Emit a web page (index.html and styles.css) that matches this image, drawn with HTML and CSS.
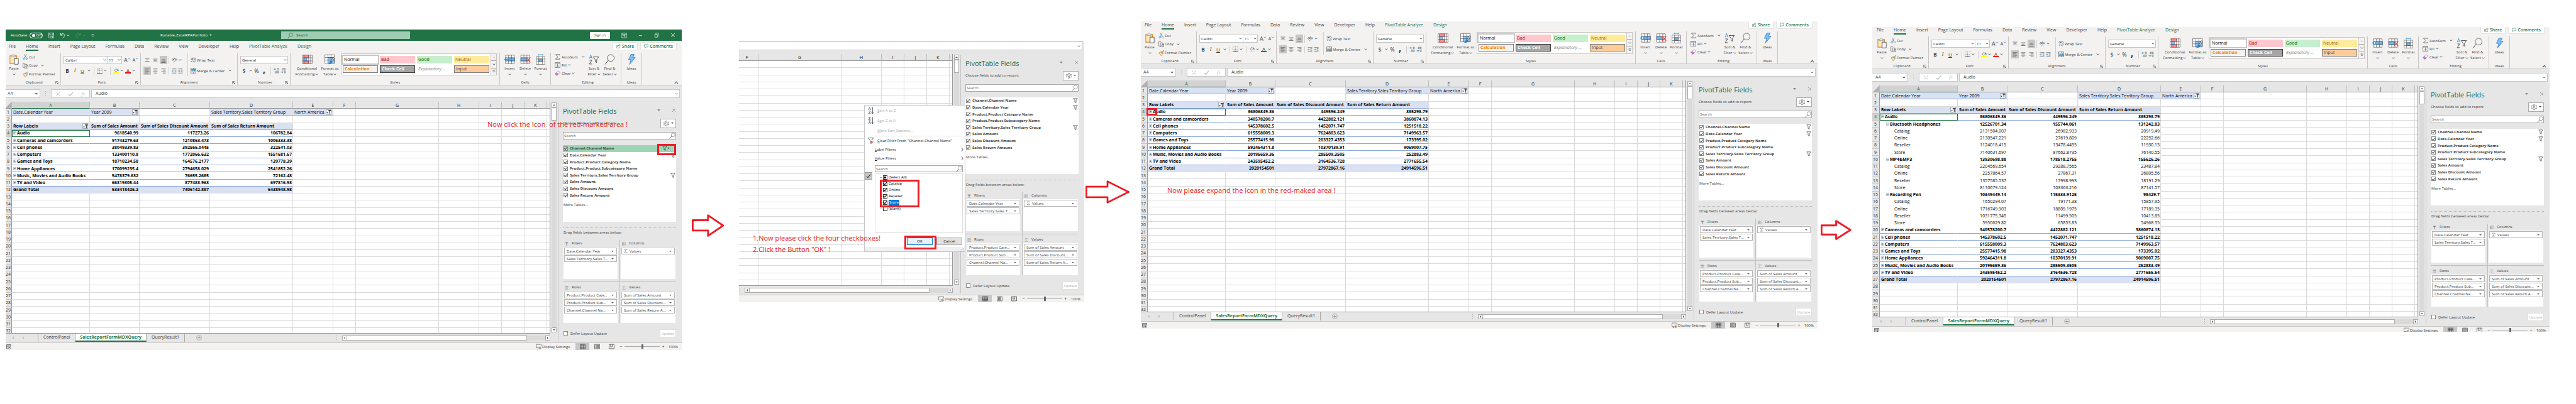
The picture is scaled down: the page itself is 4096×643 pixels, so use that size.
FILE: index.html
```html
<!DOCTYPE html>
<html lang="en">
<head>
<meta charset="utf-8">
<title>PivotTable filter walkthrough</title>
<link rel="stylesheet" href="styles.css">
<script src="app.js" defer></script>
</head>
<body>

<svg class="sprite" aria-hidden="true">
  <symbol id="chev" viewBox="0 0 8 8"><path d="M1.5 2.5 4 5l2.500-2.500" stroke-width="1.500"/></symbol>
  <symbol id="chev-up" viewBox="0 0 8 8"><path d="M1 6l3-3.500L7 6" stroke-width="1.200"/></symbol>
  <symbol id="chev-right" viewBox="0 0 8 16"><path d="M1.500 2l5 6-5 6" stroke-width="1.500"/></symbol>
  <symbol id="tri" viewBox="0 0 8 8"><path d="M0 2h8L4 6z" fill="currentColor" stroke="none"/></symbol>
  <symbol id="tri-up" viewBox="0 0 8 8"><path d="M0 6h8L4 2z" fill="currentColor" stroke="none"/></symbol>
  <symbol id="tri-left" viewBox="0 0 8 8"><path d="M6 0v8L2 4z" fill="currentColor" stroke="none"/></symbol>
  <symbol id="tri-right" viewBox="0 0 8 8"><path d="M2 0v8l4-4z" fill="currentColor" stroke="none"/></symbol>
  <symbol id="save" viewBox="0 0 16 16"><path d="M.7.7h14.600v14.600H3L.7 13zM3.500.7v6h9v-6M5 15.300v-5h6.500v5" stroke-width="1.300"/></symbol>
  <symbol id="undo" viewBox="0 0 16 16"><path d="M2 1v6h6M2 7c3-6 12-5 12 1 0 3-3 4-6 7" stroke-width="1.600"/></symbol>
  <symbol id="redo" viewBox="0 0 16 16"><path d="M14 1v6H8M14 7C11 1 2 2 2 8c0 3 3 4 6 7" stroke-width="1.600"/></symbol>
  <symbol id="customize" viewBox="0 0 8 8"><path d="M1 1.500h6M1.500 4 4 6.500 6.500 4" stroke-width="1.200"/></symbol>
  <symbol id="search" viewBox="0 0 16 16"><circle cx="10" cy="6" r="4.800"/><path d="M6.700 9.500 1 15.500" stroke-width="1.300"/></symbol>
  <symbol id="ribbon-opts" viewBox="0 0 16 16"><path d="M1.500 1.500h13v13h-13zM1.500 4.500h13M8 13V7M5.500 9 8 6.700 10.500 9" stroke-width="1.200"/></symbol>
  <symbol id="restore" viewBox="0 0 16 16"><path d="M2.500 5h8v9.500h-8zM5.500 5V1.500h8V11h-3" stroke-width="1.300"/></symbol>
  <symbol id="cross" viewBox="0 0 16 16"><path d="M2.500 2.500l11 11M13.500 2.500l-11 11" stroke-width="1.700"/></symbol>
  <symbol id="tick" viewBox="0 0 16 16"><path d="M2 9l4 4.500L14 3" stroke-width="2.200"/></symbol>
  <symbol id="share" viewBox="0 0 16 16"><path d="M6 5H1.500v9.500h11V10M4.500 11c1-4 3-5.500 6-5.500V8.500L15 4.500 10.500 1v2.500C7 3.500 5 6 4.500 11z" stroke-width="1.200"/></symbol>
  <symbol id="comment" viewBox="0 0 16 16"><path d="M1.500 2h13v9H7l-3.500 3.500V11h-2z" stroke-width="1.300"/></symbol>

  <symbol id="paste" viewBox="0 0 28 32"><path d="M5 5H1.500v23.500H14V13h7.500V5H18" fill="#fbe7bd" stroke="#e08a1e" stroke-width="2"/><path d="M5 8V4.500h3.500C9 .5 14 .5 14.500 4.500H18V8z" fill="#f3f2f1" stroke="#777" stroke-width="1.300"/><path d="M14.500 13.500h12v17h-12z" fill="#fff" stroke-width="1.500"/></symbol>
  <symbol id="cut" viewBox="0 0 16 16"><path d="M4.500 0l5.500 11M11 0 5.500 11" stroke="#555"/><circle cx="4" cy="13" r="2.200" stroke="#2a8dd4" stroke-width="1.400"/><circle cx="11.500" cy="13" r="2.200" stroke="#2a8dd4" stroke-width="1.400"/></symbol>
  <symbol id="copy" viewBox="0 0 16 16"><path d="M5 13H1V1h6.500M5.500 4h6l3.500 3.500V15.500H5.500zM11 4v4h4M8 10h4.500M8 12.500h4.500"/></symbol>
  <symbol id="brush" viewBox="0 0 16 16"><path d="M1 7.500 7 5l5 5-4.500 5.500z" fill="#fbe0b8" stroke="#e08a1e" stroke-width="1.600"/><path d="M7 5l2-2 5 5-2 2zM11 4l3-3.500L16 2.500 13 6" fill="#f3f2f1"/></symbol>
  <symbol id="borders" viewBox="0 0 16 16"><path d="M1 1h14M1 1v14M15 1v14M8 1v14M1 8h14" stroke-dasharray="1 1.300"/><path d="M.5 15.200h15" stroke="#222" stroke-width="1.600"/></symbol>
  <symbol id="bucket" viewBox="0 0 16 16"><path d="M3 7l5-5 4.500 5L8 11z"/><path d="M12 3c2 1 2.500 3 2.500 6" stroke="#2a72b8" stroke-width="2"/><path d="M0 12.500h16V16H0z" fill="#ffff00" stroke="none"/></symbol>
  <symbol id="al-top" viewBox="0 0 16 16"><path d="M1 2h14M3.500 6.500h9M1 11h14" stroke-width="1.300"/></symbol>
  <symbol id="al-mid" viewBox="0 0 16 16"><path d="M1 4h14M3.500 8.500h9M1 13h14" stroke-width="1.300"/></symbol>
  <symbol id="al-bot" viewBox="0 0 16 16"><path d="M3.500 6h9M1 10.500h14M1 15h14" stroke-width="1.300"/></symbol>
  <symbol id="al-left" viewBox="0 0 16 16"><path d="M1 1.500h14M1 5.500h9M1 10h14M1 14.500h9" stroke-width="1.300"/></symbol>
  <symbol id="al-center" viewBox="0 0 16 16"><path d="M1 1.500h14M3.500 5.500h9M1 10h14M3.500 14.500h9" stroke-width="1.300"/></symbol>
  <symbol id="al-right" viewBox="0 0 16 16"><path d="M1 1.500h14M6 5.500h9M1 10h14M6 14.500h9" stroke-width="1.300"/></symbol>
  <symbol id="orient" viewBox="0 0 16 16"><circle cx="3" cy="7" r="2.200"/><path d="M3 4l4 5M7 1l4 5"/><circle cx="8" cy="6" r="2"/><path d="M5 15l9-9M14.500 9.500V5.500h-4" stroke="#2a8dd4" stroke-width="1.500"/></symbol>
  <symbol id="indent-less" viewBox="0 0 16 16"><path d="M1 1.500h14M9.500 5.500H15M9.500 10H15M1 14.500h14" stroke-width="1.300"/><path d="M7 8H1M3.500 5.500 1 8l2.500 2.500" stroke="#2a8dd4" stroke-width="1.600"/></symbol>
  <symbol id="indent-more" viewBox="0 0 16 16"><path d="M1 1.500h14M9.500 5.500H15M9.500 10H15M1 14.500h14" stroke-width="1.300"/><path d="M0 8h6.500M4 5.500 6.500 8 4 10.500" stroke="#2a8dd4" stroke-width="1.600"/></symbol>
  <symbol id="wrap" viewBox="0 0 16 16"><circle cx="4" cy="4.500" r="2.200"/><path d="M6.500 2.500V7M9.500 0v7"/><circle cx="12" cy="4.800" r="2.200"/><path d="M6 10.500c-4-2-5 4-.5 3.500"/><path d="M14 8.500c1 4-2 4-5.500 4M10.500 10 8 12.500l2.500 2.500" stroke="#2a8dd4" stroke-width="1.600"/></symbol>
  <symbol id="merge" viewBox="0 0 16 16"><path d="M1 1h14v14H1zM1 4.500h14M1 11.500h14M8 1v3.500M8 11.500V15"/><path d="M3 8h10M5 6 3 8l2 2M11 6l2 2-2 2" stroke="#2a8dd4" stroke-width="1.500"/></symbol>
  <symbol id="dec-more" viewBox="0 0 16 16"><path d="M7 4H1M3.500 1.500 1 4l2.500 2.500" stroke="#2a8dd4" stroke-width="1.500"/><ellipse cx="12.500" cy="4" rx="2" ry="3"/><ellipse cx="7.500" cy="12" rx="1.800" ry="3"/><ellipse cx="12.500" cy="12" rx="1.800" ry="3"/><path d="M4 14v1.200"/></symbol>
  <symbol id="dec-less" viewBox="0 0 16 16"><path d="M1 12h6M4.500 9.500 7 12l-2.500 2.500" stroke="#2a8dd4" stroke-width="1.500"/><ellipse cx="7.500" cy="4" rx="1.800" ry="3"/><ellipse cx="12.500" cy="4" rx="1.800" ry="3"/><ellipse cx="12.500" cy="12" rx="1.800" ry="3"/><path d="M4 6v1.200"/></symbol>
  <symbol id="cond" viewBox="0 0 28 24"><path d="M1 1h26v22H1z" fill="#fff"/><path d="M5 1h13v7H5zM5 16h13v7H5z" fill="#ff8f8f" stroke="#e02020"/><path d="M5 8h8v8H5z" fill="#83bdf0" stroke="#2a72b8"/><path d="M1 8h26M1 16h26M5 1v22M18 1v22M23 1v22" /></symbol>
  <symbol id="fmt-table" viewBox="0 0 28 26"><path d="M1 1h25v22H1z" fill="#fff"/><path d="M9 8h17v15H9z" fill="#8dc3f2"/><path d="M1 8h25M1 15h25M9 1v22M17 1v22"/><path d="M27 6l-9 12" stroke-width="4"/><path d="M27 6l-9 12" stroke="#fff" stroke-width="2"/><path d="M18 16c-4 1-3 6-7 9 5 0 9-2 9-6z" fill="#2a8dd4" stroke="#1d6fb5"/></symbol>
  <symbol id="c-insert" viewBox="0 0 28 24"><path d="M3 1h23v22H3zM3 8h23M3 16h23M11 1v22M19 1v22" fill="#fff"/><path d="M9 8h18v8H9z" fill="#6fb3ec" stroke="#333"/><path d="M18 8v8"/><path d="M12 12H1M6 7l-5 5 5 5" stroke="#2a8dd4" stroke-width="2"/></symbol>
  <symbol id="c-delete" viewBox="0 0 28 24"><path d="M2 1h23v22H2zM2 8h23M2 16h23M10 1v22M18 1v22" fill="#fff"/><path d="M2 8h15v8H2z" fill="#6fb3ec" stroke="#333"/><path d="M16 7l11 13M27 7 16 20" stroke="#f04040" stroke-width="2"/></symbol>
  <symbol id="c-format" viewBox="0 0 28 30"><path d="M2 7h24v22H2zM2 14h24M2 22h24M9 7v22M19 7v22" fill="#fff"/><path d="M9 14h10v8H9z" fill="#6fb3ec"/><path d="M8 2h12M8 0v4M20 0v4" stroke="#2a8dd4" stroke-width="1.500"/></symbol>
  <symbol id="sigma" viewBox="0 0 16 16"><path d="M14 4V1.500H2.500L9 8l-6.500 6.500H14V12" stroke-width="1.300"/></symbol>
  <symbol id="fill" viewBox="0 0 16 16"><path d="M1 1h14v14H1zM1 3.500h14"/><path d="M8 5v8M5 10l3 3 3-3" stroke="#2a8dd4" stroke-width="1.600"/></symbol>
  <symbol id="eraser" viewBox="0 0 16 16"><path d="M1.500 10 10 1.500l5 4L6.500 14.500z" fill="#fff" stroke="#9a3fa8"/><path d="M1.500 10 5 6.500l5 4-3.500 4z" fill="#c87fd3" stroke="#9a3fa8"/></symbol>
  <symbol id="sort" viewBox="0 0 28 30"><path d="M1 13 5 2l4 11M2.500 9.500h5" stroke="#2a8dd4" stroke-width="1.500"/><path d="M1.500 17.500H8L1 28h7.500M12 8h15l-5.500 8v8L17.500 22v-6z" stroke-width="1.500"/></symbol>
  <symbol id="find" viewBox="0 0 28 30"><circle cx="17" cy="11" r="9.500" stroke-width="1.300"/><path d="M10 18 1 29" stroke-width="1.700"/></symbol>
  <symbol id="bolt" viewBox="0 0 22 30"><path d="M9 1h9l-4 9h7L5 29l4-13H2z" fill="#83bdf0" stroke="#2a7fd0" stroke-width="1.500"/></symbol>
  <symbol id="launch" viewBox="0 0 8 8"><path d="M1 7V1h6M3 3l4 4M7 4v3H4"/></symbol>
  <symbol id="funnel" viewBox="0 0 16 16"><path d="M1.500 1.500h13L10 7.500V15L6 13V7.500z" stroke-width="1.400"/></symbol>
  <symbol id="funnel-solid" viewBox="0 0 16 16"><path d="M1 1h14L9.500 8v7.500h-3V8z" fill="currentColor" stroke="none"/></symbol>
  <symbol id="filtered" viewBox="0 0 16 16"><path d="M5 2h11l-4 5v7.500H9.500V7z" fill="#444" stroke="none"/><path d="M0 9h6l-3 4z" fill="#444" stroke="none"/></symbol>
  <symbol id="cols" viewBox="0 0 16 16"><path d="M2.500 1v14" stroke-width="3"/><path d="M7 1v14M10.500 1v14M14 1v14" stroke-width="1.300"/></symbol>
  <symbol id="rows" viewBox="0 0 16 16"><path d="M1 3h14" stroke-width="3"/><path d="M1 7.500h14M1 11h14M1 14.500h14" stroke-width="1.300"/></symbol>
  <symbol id="gear" viewBox="0 0 16 16"><circle cx="8" cy="8" r="2.500"/><path d="M6.500 1h3l.5 2.500 2 1 2.500-1L16 6l-2 2 2 2-1.500 2.500-2.500-1-2 1-.5 2.500h-3L6 12.500l-2-1-2.500 1L0 10l2-2-2-2 1.500-2.500 2.500 1 2-1z"/></symbol>
  <symbol id="plus" viewBox="0 0 16 16"><path d="M8 2v12M2 8h12" stroke-width="1.500"/></symbol>
  <symbol id="minus" viewBox="0 0 16 16"><path d="M2 8h12" stroke-width="1.500"/></symbol>
  <symbol id="plus-circle" viewBox="0 0 16 16"><circle cx="8" cy="8" r="7"/><path d="M8 4v8M4 8h8" stroke-width="1.600"/></symbol>
  <symbol id="node-plus" viewBox="0 0 9 9"><path d="M.5.5h8v8h-8z" fill="#e4ecf7" stroke="#8b9bb5"/><path d="M4.500 2v5M2 4.500h5" stroke="#33415c"/></symbol>
  <symbol id="node-minus" viewBox="0 0 9 9"><path d="M.5.5h8v8h-8z" fill="#e4ecf7" stroke="#8b9bb5"/><path d="M2 4.500h5" stroke="#33415c"/></symbol>
  <symbol id="macro" viewBox="0 0 16 16"><path d="M15 5V1H1v13h5M1 4h14M3 7h3M3 10h2" stroke-width="1.300"/><circle cx="10.500" cy="10.500" r="4.500"/><circle cx="10.500" cy="10.500" r="1.500" fill="#444"/></symbol>
  <symbol id="display" viewBox="0 0 16 16"><path d="M7 11.500H1V2h14v5M3 15h4"/><circle cx="11.500" cy="12" r="3"/><circle cx="11.500" cy="12" r="1"/></symbol>
  <symbol id="v-normal" viewBox="0 0 16 14"><path d="M1 1h14v12H1zM1 5h14M1 9h14M5.500 1v12M10.500 1v12" stroke-width="1.300"/></symbol>
  <symbol id="v-layout" viewBox="0 0 16 14"><path d="M1 1h14v12H1zM4.500 3h7v8h-7zM6 5h4M6 7h4M6 9h4" stroke-width="1.200"/></symbol>
  <symbol id="v-break" viewBox="0 0 16 14"><path d="M1 1h14v12H1zM5 1v7M10 1v7M5 8h5" stroke-width="1.300"/></symbol>
  <symbol id="sort-az" viewBox="0 0 18 24"><path d="M1 10 4.500 1 8 10M2.500 7h4" stroke="#2a8dd4" stroke-width="1.800"/><path d="M1.500 13.500H7L1.500 22H8M13.500 1v20M10 17.500l3.500 4 3.500-4" stroke-width="1.600"/></symbol>
  <symbol id="sort-za" viewBox="0 0 18 24"><path d="M1 22 4.500 13 8 22M2.500 19h4" stroke="#2a8dd4" stroke-width="1.800"/><path d="M1.500 1.500H7L1.500 10H8M13.500 1v20M10 17.500l3.500 4 3.500-4" stroke-width="1.600"/></symbol>
  <symbol id="clear-filter" viewBox="0 0 18 18"><path d="M1 1h15l-5.500 6M1 1l5.500 7v7l3 2V9" stroke-width="1.300"/><path d="M10 10l6 6M16 10l-6 6" stroke="#e03030" stroke-width="1.500"/></symbol>
  <symbol id="grip" viewBox="0 0 8 8"><path d="M6 1h1.500M6 4h1.500M6 7h1.500M3 4h1.500M3 7h1.500M0 7h1.500" stroke="#999" stroke-width="1.500"/></symbol>
</svg>

<main class="board">

  <section class="shot shot--pick">
    <div class="book" data-parts="title tabs ribbon formula body status" data-sheet="store" data-hot="0"></div>
    <p class="note note--pick">Now click the Icon &nbsp;of the red-marked area !</p>
    <span class="mark mark--pick"></span>
  </section>

  <svg class="arrow arrow--1" viewBox="0 0 90 63" aria-hidden="true"><path d="M2.500 16.500h43v-14L88 31.500 45.500 60.500v-15h-43z"/></svg>

  <section class="shot shot--menu">
    <div class="book book--part" data-parts="formula body status" data-sheet="blank"></div>
    <form class="menu">
      <button type="button" class="menu__item menu__item--tall is-off"><svg class="i-sort"><use href="#sort-az"/></svg><span><u>S</u>ort A to Z</span></button>
      <button type="button" class="menu__item menu__item--tall is-off"><svg class="i-sort"><use href="#sort-za"/></svg><span>S<u>o</u>rt Z to A</span></button>
      <button type="button" class="menu__item menu__item--tall is-off"><i class="i-sort"></i><span><u>M</u>ore Sort Options...</span></button>
      <hr>
      <button type="button" class="menu__item menu__item--clear"><svg class="i-sort"><use href="#clear-filter"/></svg><span><u>C</u>lear Filter From "Channel.Channel Name"</span></button>
      <button type="button" class="menu__item menu__item--sub"><span><u>L</u>abel Filters</span><svg class="i-right"><use href="#chev-right"/></svg></button>
      <button type="button" class="menu__item menu__item--sub"><span><u>V</u>alue Filters</span><svg class="i-right"><use href="#chev-right"/></svg></button>
      <hr>
      <label class="find find--menu"><input type="text" placeholder="Search" aria-label="Search items"><svg class="i-11"><use href="#search"/></svg></label>
      <div class="tree">
        <label><input type="checkbox" class="box box--part">(Select All)</label>
        <label><input type="checkbox" class="box box--dark" checked>Catalog</label>
        <label><input type="checkbox" class="box box--dark" checked>Online</label>
        <label><input type="checkbox" class="box box--dark" checked>Reseller</label>
        <label><input type="checkbox" class="box box--dark" checked><span class="picked">Store</span></label>
        <label><input type="checkbox" class="box box--dark">(blank)</label>
      </div>
      <div class="menu__actions">
        <button type="button" class="btn btn--ok">OK</button>
        <button type="button" class="btn">Cancel</button>
      </div>
      <div class="menu__foot"><svg class="i-5"><use href="#grip"/></svg></div>
      <span class="menu__state"><svg class="i-8"><use href="#tick"/></svg></span>
      <span class="mark mark--items"></span>
      <span class="mark mark--ok"></span>
    </form>
    <p class="note note--menu">1.Now please click the four checkboxes!<br>2.Click the Button "OK" !</p>
  </section>

  <svg class="arrow arrow--2" viewBox="0 0 125 65" aria-hidden="true"><path d="M2.500 17.500h60v-15l60 30-60 30v-15h-60z"/></svg>

  <section class="shot shot--expand">
    <div class="book" data-parts="tabs ribbon formula body status" data-sheet="all"></div>
    <p class="note note--expand">Now please expand the Icon in the red-maked area !</p>
    <span class="mark mark--node"></span>
  </section>

  <svg class="arrow arrow--3" viewBox="0 0 88 57" aria-hidden="true"><path d="M2.500 15.500h41.500v-13L85 28.500 44 54.500v-13H2.500z"/></svg>

  <section class="shot shot--result">
    <div class="book" data-parts="tabs ribbon formula body status" data-sheet="expanded"></div>
  </section>
</main>

<template id="part-title">
  <header class="title">
    <div class="title__quick">
      <span class="autosave">AutoSave <button type="button" class="switch">Off</button></span>
      <button type="button" aria-label="Save"><svg class="i-9"><use href="#save"/></svg></button>
      <button type="button" aria-label="Undo"><svg class="i-9"><use href="#undo"/></svg><svg class="i-5"><use href="#chev"/></svg></button>
      <button type="button" class="is-dim" aria-label="Redo"><svg class="i-9"><use href="#redo"/></svg><svg class="i-5"><use href="#chev"/></svg></button>
      <button type="button" aria-label="Customize"><svg class="i-5"><use href="#customize"/></svg></button>
    </div>
    <h1 class="title__name">Runable_ExcelRPAPortfolio <svg class="i-4"><use href="#tri"/></svg></h1>
    <label class="title__search"><svg class="i-9"><use href="#search"/></svg><input type="text" placeholder="Search" aria-label="Search"></label>
    <div class="title__window">
      <button type="button" class="signin">Sign in</button>
      <button type="button" aria-label="Ribbon options"><svg class="i-9"><use href="#ribbon-opts"/></svg></button>
      <button type="button" aria-label="Minimize"><svg class="i-7"><use href="#minus"/></svg></button>
      <button type="button" aria-label="Restore"><svg class="i-8"><use href="#restore"/></svg></button>
      <button type="button" aria-label="Close"><svg class="i-8"><use href="#cross"/></svg></button>
    </div>
  </header>
</template>

<template id="part-tabs">
  <nav class="tabs">
    <a href="#">File</a><a href="#" class="is-active">Home</a><a href="#">Insert</a><a href="#">Page Layout</a><a href="#">Formulas</a><a href="#">Data</a><a href="#">Review</a><a href="#">View</a><a href="#">Developer</a><a href="#">Help</a><a href="#" class="is-context">PivotTable Analyze</a><a href="#" class="is-context">Design</a>
    <span class="tabs__end">
      <button type="button" class="pill"><svg class="i-7"><use href="#share"/></svg>Share</button>
      <button type="button" class="pill"><svg class="i-7"><use href="#comment"/></svg>Comments</button>
    </span>
  </nav>
</template>

<template id="part-ribbon">
  <div class="ribbon">
    <section class="group group--clipboard">
      <div class="group__body">
        <button type="button" class="big"><svg class="i-big"><use href="#paste"/></svg><span>Paste</span><svg class="i-5"><use href="#chev"/></svg></button>
        <div class="stack">
          <button type="button"><svg class="i-9"><use href="#cut"/></svg>Cut</button>
          <button type="button"><svg class="i-9"><use href="#copy"/></svg>Copy<svg class="i-5 far"><use href="#chev"/></svg></button>
          <button type="button"><svg class="i-9"><use href="#brush"/></svg>Format Painter</button>
        </div>
      </div>
      <h2>Clipboard<svg class="i-5"><use href="#launch"/></svg></h2>
    </section>

    <section class="group group--font">
      <div class="group__body rows">
        <div class="row">
          <span class="pick pick--font"><select aria-label="Font"><option>Calibri</option></select><svg class="i-5"><use href="#chev"/></svg></span>
          <span class="pick pick--size"><select aria-label="Font size"><option>11</option></select><svg class="i-5"><use href="#chev"/></svg></span>
          <button type="button" class="sizer sizer--up">A<svg class="i-5"><use href="#chev-up"/></svg></button>
          <button type="button" class="sizer">A<svg class="i-5"><use href="#chev"/></svg></button>
        </div>
        <div class="row">
          <button type="button" class="b12"><b>B</b></button><button type="button" class="b12"><em>I</em></button><button type="button" class="b12"><u>U</u></button><button type="button" class="b8" aria-label="Underline style"><svg class="i-5"><use href="#chev"/></svg></button>
          <i class="sep"></i>
          <button type="button" aria-label="Borders"><svg class="i-9"><use href="#borders"/></svg></button><button type="button" class="b8" aria-label="Border style"><svg class="i-5"><use href="#chev"/></svg></button>
          <i class="sep"></i>
          <button type="button" aria-label="Fill colour"><svg class="i-9"><use href="#bucket"/></svg></button><button type="button" class="b8" aria-label="Fill palette"><svg class="i-5"><use href="#chev"/></svg></button>
          <button type="button" class="ink">A</button><button type="button" class="b8" aria-label="Font palette"><svg class="i-5"><use href="#chev"/></svg></button>
        </div>
      </div>
      <h2>Font<svg class="i-5"><use href="#launch"/></svg></h2>
    </section>

    <section class="group group--align">
      <div class="group__body">
        <div class="rows rows--align">
          <div class="row">
            <button type="button" class="al" aria-label="Top"><svg class="i-8"><use href="#al-top"/></svg></button>
            <button type="button" class="al" aria-label="Middle"><svg class="i-8"><use href="#al-mid"/></svg></button>
            <button type="button" class="al is-on" aria-label="Bottom"><svg class="i-8"><use href="#al-bot"/></svg></button>
            <i class="sep"></i>
            <button type="button" aria-label="Orientation"><svg class="i-9"><use href="#orient"/></svg></button><button type="button" class="b8" aria-label="Angles"><svg class="i-5"><use href="#chev"/></svg></button>
          </div>
          <div class="row">
            <button type="button" class="al is-on" aria-label="Left"><svg class="i-8"><use href="#al-left"/></svg></button>
            <button type="button" class="al" aria-label="Centre"><svg class="i-8"><use href="#al-center"/></svg></button>
            <button type="button" class="al" aria-label="Right"><svg class="i-8"><use href="#al-right"/></svg></button>
            <i class="sep"></i>
            <button type="button" aria-label="Decrease indent"><svg class="i-8"><use href="#indent-less"/></svg></button>
            <button type="button" class="al" aria-label="Increase indent"><svg class="i-8"><use href="#indent-more"/></svg></button>
          </div>
        </div>
        <div class="rows rows--merge">
          <div class="row"><button type="button" class="named"><svg class="i-9"><use href="#wrap"/></svg>Wrap Text</button></div>
          <div class="row"><button type="button" class="named"><svg class="i-9"><use href="#merge"/></svg>Merge &amp; Center<svg class="i-5 far"><use href="#chev"/></svg></button></div>
        </div>
      </div>
      <h2>Alignment<svg class="i-5"><use href="#launch"/></svg></h2>
    </section>

    <section class="group group--number">
      <div class="group__body rows">
        <div class="row"><span class="pick pick--format"><select aria-label="Number format"><option>General</option></select><svg class="i-5"><use href="#chev"/></svg></span></div>
        <div class="row">
          <button type="button" class="b12 sym">$</button><button type="button" class="b8" aria-label="Currencies"><svg class="i-5"><use href="#chev"/></svg></button><button type="button" class="b12 sym">%</button><button type="button" class="b12 comma">,</button>
          <i class="sep"></i>
          <button type="button" aria-label="Increase decimals"><svg class="i-9"><use href="#dec-more"/></svg></button>
          <button type="button" class="al" aria-label="Decrease decimals"><svg class="i-9"><use href="#dec-less"/></svg></button>
        </div>
      </div>
      <h2>Number<svg class="i-5"><use href="#launch"/></svg></h2>
    </section>

    <section class="group group--styles">
      <div class="group__body">
        <button type="button" class="big big--cond"><svg class="i-big"><use href="#cond"/></svg><span>Conditional</span><span>Formatting<svg class="i-5"><use href="#chev"/></svg></span></button>
        <button type="button" class="big big--table"><svg class="i-big"><use href="#fmt-table"/></svg><span>Format as</span><span>Table<svg class="i-5"><use href="#chev"/></svg></span></button>
        <div class="gallery">
          <div class="gallery__grid">
            <button type="button" class="st st--normal">Normal</button>
            <button type="button" class="st st--bad">Bad</button>
            <button type="button" class="st st--good">Good</button>
            <button type="button" class="st st--neutral">Neutral</button>
            <button type="button" class="st st--calc">Calculation</button>
            <button type="button" class="st st--check">Check Cell</button>
            <button type="button" class="st st--expl">Explanatory ...</button>
            <button type="button" class="st st--input">Input</button>
          </div>
          <div class="gallery__nav">
            <button type="button" class="is-off" aria-label="Up"><svg class="i-5"><use href="#chev-up"/></svg></button>
            <button type="button" aria-label="Down"><svg class="i-5"><use href="#chev"/></svg></button>
            <button type="button" aria-label="More"><svg class="i-5"><use href="#customize"/></svg></button>
          </div>
        </div>
      </div>
      <h2>Styles</h2>
    </section>

    <section class="group group--cells">
      <div class="group__body">
        <button type="button" class="big"><svg class="i-big"><use href="#c-insert"/></svg><span>Insert</span><svg class="i-5"><use href="#chev"/></svg></button>
        <button type="button" class="big"><svg class="i-big"><use href="#c-delete"/></svg><span>Delete</span><svg class="i-5"><use href="#chev"/></svg></button>
        <button type="button" class="big"><svg class="i-big"><use href="#c-format"/></svg><span>Format</span><svg class="i-5"><use href="#chev"/></svg></button>
      </div>
      <h2>Cells</h2>
    </section>

    <section class="group group--editing">
      <div class="group__body">
        <div class="stack">
          <button type="button"><svg class="i-9"><use href="#sigma"/></svg>AutoSum<svg class="i-5 far"><use href="#chev"/></svg></button>
          <button type="button"><svg class="i-9"><use href="#fill"/></svg>Fill<svg class="i-5"><use href="#chev"/></svg></button>
          <button type="button"><svg class="i-9"><use href="#eraser"/></svg>Clear<svg class="i-5"><use href="#chev"/></svg></button>
        </div>
        <button type="button" class="big"><svg class="i-big"><use href="#sort"/></svg><span>Sort &amp;</span><span>Filter<svg class="i-5"><use href="#chev"/></svg></span></button>
        <button type="button" class="big"><svg class="i-big"><use href="#find"/></svg><span>Find &amp;</span><span>Select<svg class="i-5"><use href="#chev"/></svg></span></button>
      </div>
      <h2>Editing</h2>
    </section>

    <section class="group group--ideas">
      <div class="group__body">
        <button type="button" class="big"><svg class="i-big"><use href="#bolt"/></svg><span>Ideas</span></button>
      </div>
      <h2>Ideas</h2>
    </section>
    <button type="button" class="collapse" aria-label="Collapse ribbon"><svg class="i-7"><use href="#chev-up"/></svg></button>
  </div>
</template>

<template id="part-formula">
  <div class="formula">
    <label class="formula__name"><input type="text" value="A4" aria-label="Name box"><svg class="i-5"><use href="#tri"/></svg></label>
    <i class="dots"></i>
    <div class="formula__tools">
      <button type="button" aria-label="Cancel"><svg class="i-9"><use href="#cross"/></svg></button>
      <button type="button" aria-label="Enter"><svg class="i-9"><use href="#tick"/></svg></button>
      <button type="button" class="fx">f<small>x</small></button>
    </div>
    <label class="formula__text"><input type="text" value="Audio" aria-label="Formula"><svg class="i-5"><use href="#chev"/></svg></label>
  </div>
</template>

<template id="part-body">
  <div class="body">
    <div class="sheet"><table class="cells"></table></div>
    <div class="vscroll">
      <button type="button" aria-label="Scroll up"><svg class="i-4"><use href="#tri-up"/></svg></button>
      <span class="vscroll__thumb"></span>
      <button type="button" class="end" aria-label="Scroll down"><svg class="i-4"><use href="#tri"/></svg></button>
    </div>
    <footer class="sheets">
      <div class="sheets__nav"><svg class="i-5"><use href="#tri-left"/></svg><svg class="i-5"><use href="#tri-right"/></svg></div>
      <nav class="sheets__tabs"><a href="#">ControlPanel</a><a href="#" class="is-active">SalesReportFormMDXQuery</a><a href="#">QueryResult1</a></nav>
      <button type="button" class="sheets__add" aria-label="New sheet"><svg class="i-9"><use href="#plus-circle"/></svg></button>
      <i class="dots"></i>
      <div class="hscroll">
        <button type="button" aria-label="Scroll left"><svg class="i-4"><use href="#tri-left"/></svg></button>
        <span class="hscroll__thumb"></span>
        <button type="button" class="end" aria-label="Scroll right"><svg class="i-4"><use href="#tri-right"/></svg></button>
      </div>
    </footer>
    <aside class="pane">
      <header class="pane__head"><h2>PivotTable Fields</h2><button type="button" aria-label="Options"><svg class="i-5"><use href="#tri"/></svg></button><button type="button" aria-label="Close"><svg class="i-7"><use href="#cross"/></svg></button></header>
      <div class="pane__choose">Choose fields to add to report:<button type="button" class="gear" aria-label="Tools"><svg class="i-9"><use href="#gear"/></svg><svg class="i-4"><use href="#tri"/></svg></button></div>
      <label class="find"><input type="text" placeholder="Search" aria-label="Search fields"><svg class="i-11"><use href="#search"/></svg></label>
      <div class="pane__list"><ul></ul><a href="#">More Tables...</a></div>
      <p class="pane__drag">Drag fields between areas below:</p>
      <div class="areas"></div>
      <div class="defer"><label><input type="checkbox" class="box">Defer Layout Update</label><button type="button" disabled>Update</button></div>
    </aside>
  </div>
</template>

<template id="part-status">
  <footer class="status">
    <svg class="i-8 status__macro"><use href="#macro"/></svg>
    <button type="button" class="status__display"><svg class="i-9"><use href="#display"/></svg>Display Settings</button>
    <button type="button" class="view is-on" aria-label="Normal"><svg class="i-9"><use href="#v-normal"/></svg></button>
    <button type="button" class="view" aria-label="Page layout"><svg class="i-9"><use href="#v-layout"/></svg></button>
    <button type="button" class="view" aria-label="Page break"><svg class="i-9"><use href="#v-break"/></svg></button>
    <button type="button" aria-label="Zoom out"><svg class="i-5"><use href="#minus"/></svg></button>
    <input type="range" min="0" max="100" value="50" aria-label="Zoom">
    <button type="button" aria-label="Zoom in"><svg class="i-5"><use href="#plus"/></svg></button>
    <span class="status__zoom">100%</span>
  </footer>
</template>

</body>
</html>
```

FILE: styles.css
```css
* { box-sizing: border-box; }

body {
  margin: 0;
  background: #fff;
  color: #3c3c3c;
  font: 6px/10px "Open Sans", "Noto Sans", sans-serif;
}

h1, h2, p, ul { margin: 0; padding: 0; font-weight: 400; font-size: inherit; }
ul { list-style: none; }
a { color: inherit; text-decoration: none; }
button, input, select { margin: 0; padding: 0; border: 0; background: none; color: inherit; font: inherit; min-width: 0; }
button { display: flex; align-items: center; justify-content: center; white-space: nowrap; }
select { appearance: none; }

svg { display: block; flex: none; fill: none; stroke: currentColor; overflow: visible; }
.sprite { position: absolute; width: 0; height: 0; }
.i-4 { width: 4px; height: 4px; }
.i-5 { width: 5px; height: 5px; }
.i-7 { width: 7px; height: 7px; }
.i-8 { width: 8px; height: 8px; }
.i-9 { width: 9px; height: 9px; }
.i-11 { width: 10px; height: 10px; }
.i-big { width: 17px; height: 17px; }
.i-sort { width: 10px; height: 12px; }
.i-right { width: 4px; height: 8px; }

/* Board: four captures joined by arrows */
.board {
  display: grid;
  grid-template-columns: 1075fr 91fr 549fr 90fr 1076fr 87fr 1077fr;
  align-items: start;
  padding: 34px 42px 0 9px;
}
.shot { position: relative; overflow: hidden; background: #e6e6e6; }
.shot--pick { margin-top: 13px; }
.shot--menu { margin-top: 31px; }
.shot--result { margin-top: 9px; }
.shot--pick .book { margin-left: -5px; }
.shot--menu .book { margin-left: -5px; }
.shot--expand .book { margin: -3px 0 0 -4px; }
.shot--result .book { margin: -4px 0 -3px -3px; }

.arrow { stroke: #ed1c24; stroke-width: 5; stroke-linejoin: round; }
.arrow--1 { width: 51px; height: 36px; margin: 307px 0 0 16px; }
.arrow--2 { width: 70px; height: 37px; margin: 253px 0 0 2px; }
.arrow--3 { width: 49px; height: 32px; margin: 316px 0 0 5px; }

.note { position: absolute; color: #ed1c24; font-size: 11px; line-height: 18px; white-space: nowrap; }
.note--pick { right: 86px; top: 142px; }
.note--menu { left: 22px; top: 305px; }
.note--expand { left: 42px; top: 260px; }
.mark { position: absolute; border: 3px solid #ed1c24; }
.mark--pick { right: 9px; top: 182px; width: 30px; height: 18px; }
.mark--items { left: 24px; top: 118px; width: 63px; height: 44px; }
.mark--ok { left: 63px; top: 207px; width: 51px; height: 22px; }
.mark--node { left: 9px; top: 138px; width: 17px; height: 12px; }

/* Title bar */
.title { display: flex; align-items: center; height: 18px; background: #217346; color: #fff; }
.title__quick { display: flex; align-items: center; gap: 9px; width: 251px; padding-left: 13px; }
.title__quick button { gap: 2px; }
.title__quick .is-dim { color: #4f9470; }
.autosave { display: flex; align-items: center; gap: 4px; }
.title__quick .switch { width: 21px; height: 9px; padding-left: 2px; border: 1px solid #fff; border-radius: 5px; line-height: 7px; }
.switch::before { content: ""; width: 5px; height: 5px; border-radius: 50%; background: #fff; }
.title__name { display: flex; align-items: center; gap: 3px; width: 192px; }
.title__search { display: flex; align-items: center; gap: 5px; width: 205px; height: 12px; padding-left: 10px; background: #9fcdb3; color: #14592f; }
input::placeholder { color: inherit; opacity: 1; }
.title__window { display: flex; align-items: center; gap: 18px; margin-left: auto; padding-right: 10px; }
.title__window .signin { width: 32px; height: 11px; background: #fff; color: #217346; }

/* Ribbon tabs */
.tabs { display: flex; gap: 16px; height: 18px; padding: 3px 8px 2px 10px; background: #f3f2f1; font-size: 7px; line-height: 11px; }
.tabs a { height: 13px; }
.tabs .is-active { border-bottom: 2px solid #217346; }
.tabs .is-context { color: #217346; }
.tabs__end { display: flex; gap: 4px; margin: -1px 0 0 auto; }
.pill { height: 13px; gap: 2px; padding: 0 5px; border: 1px solid #e4e2e0; border-radius: 2px; background: #fff; color: #217346; font-weight: 600; }

/* Ribbon groups */
.ribbon { display: flex; padding-top: 1px; border-bottom: 1px solid #cfcdcb; background: #f3f2f1; }
.group { display: flex; flex-direction: column; height: 51px; border-right: 1px solid #c8c6c4; }
.group__body { display: flex; height: 43px; }
.group h2 { position: relative; line-height: 8px; text-align: center; }
.group h2 svg { position: absolute; right: 3px; top: 2px; }
.group--clipboard { width: 93px; padding-left: 8px; }
.group--font { width: 127px; padding-left: 4px; }
.group--align { width: 154px; }
.group--number { width: 84px; padding-left: 4px; }
.group--styles { width: 333px; }
.group--cells { width: 81px; padding: 0 3px; }
.group--editing { width: 112px; padding-left: 6px; }
.group--ideas { width: 33px; }
.group .rows { display: flex; flex-direction: column; gap: 4px; padding-top: 5px; }
.row { display: flex; align-items: center; height: 13px; }
.big { flex-direction: column; justify-content: flex-start; flex: 1; padding-top: 2px; line-height: 9px; }
.big > svg:first-child { margin-bottom: 2px; }
.big > svg + span + svg { margin-top: 2px; }
.big span { display: flex; align-items: center; gap: 1px; }
.group--clipboard .big { flex: none; width: 20px; }
.stack { display: grid; grid-template-rows: repeat(3, 1fr); height: 41px; margin-left: 4px; }
.stack button { justify-content: flex-start; gap: 1px; }
.stack .far { margin-left: 4px; }
.group--editing .stack { width: 50px; height: 39px; margin: 0; }
.group--editing .stack button { gap: 2px; }
.group--editing .big { flex: none; width: 25px; }

.pick { display: flex; align-items: center; height: 13px; padding: 0 1px 0 2px; border: 1px solid #c8c6c4; background: #fff; color: #222; }
.pick select { flex: 1; width: 10px; font-size: 6px; }
.pick--font { width: 70px; }
.pick--size { width: 24px; margin-left: -1px; }
.pick--format { width: 76px; }
.sizer { align-items: flex-start; margin-left: 3px; font-size: 7px; }
.sizer--up { font-size: 9px; }
.sizer svg { color: #2a8dd4; }
.b12 { width: 12px; height: 13px; font-size: 8px; }
.b8 { width: 8px; height: 13px; }
.b12 em { font-family: "Liberation Serif", serif; }
.sep { width: 1px; height: 12px; margin: 0 4px; background: #d2d0ce; }
.ink { width: 9px; height: 9px; margin-left: 2px; border-bottom: 2px solid #f00; font-size: 8px; line-height: 7px; }
.al { width: 12px; height: 13px; margin-right: 1px; }
.al.is-on { background: #c6c6c6; }
.rows--align { width: 74px; padding-left: 4px; }
.rows--align .sep { margin-left: 1px; }
.rows--merge { position: relative; padding-left: 5px; }
.rows--merge::before { content: ""; width: 1px; height: 36px; margin: -4px 0 -36px -5px; background: #d2d0ce; }
.named { gap: 1px; }
.named .far { margin-left: 5px; }
.sym { font-size: 9px; }
.comma { font-size: 16px; font-weight: 700; line-height: 4px; padding-bottom: 6px; }

.big--cond { flex: none; width: 38px; margin-left: 7px; }
.big--table { flex: none; width: 35px; }
.gallery { display: flex; width: 248px; height: 35px; margin-top: 1px; border: 1px solid #c8c6c4; background: #fff; }
.gallery__grid { display: grid; grid-template-columns: repeat(4, 56px); grid-auto-rows: 12px; gap: 3px; padding: 3px 2px; }
.st { justify-content: flex-start; padding-left: 2px; font-size: 7px; }
.st--normal { background: #fff; color: #000; box-shadow: 0 0 0 2px #c6c6c6; }
.st--bad { background: #ffc7ce; color: #9c0006; }
.st--good { background: #c6efce; color: #006100; }
.st--neutral { background: #ffeb9c; color: #9c5700; }
.st--calc { border: 1px solid #7f7f7f; background: #f2f2f2; color: #fa7d00; font-weight: 700; }
.st--check { border: 1px solid #3f3f3f; background: #a5a5a5; color: #fff; font-weight: 700; }
.st--expl { color: #7f7f7f; font-style: italic; }
.st--input { border: 1px solid #7f7f7f; background: #ffcc99; color: #3f3f76; }
.gallery__nav { display: grid; flex: 1; border-left: 1px solid #c8c6c4; background: #f3f2f1; }
.gallery__nav button + button { border-top: 1px solid #a8a6a4; }
.gallery__nav .is-off { color: #bbb; }
.collapse { align-self: flex-end; margin: 0 5px 0 auto; }

/* Formula bar */
.formula { display: flex; height: 20px; padding: 6px 3px 0 0; background: #e6e6e6; font-size: 7px; }
.formula label { display: flex; align-items: center; border: 1px solid #c6c6c6; background: #fff; }
.formula__name { width: 60px; padding: 0 3px 0 7px; color: #555; }
.formula input { flex: 1; width: 20px; }
.dots { width: 1px; height: 8px; margin: auto 8px; background: repeating-linear-gradient(#aaa 0 1px, transparent 1px 3px); }
.formula__tools { display: flex; width: 62px; margin-right: 2px; border: 1px solid #c6c6c6; background: #fff; color: #bdbdbd; }
.formula__tools button { flex: 1; }
.fx { font-family: "Liberation Serif", serif; font-style: italic; font-size: 9px; }
.fx small { font-size: 7px; }
.formula__text { flex: 1; padding: 0 2px 0 6px; }

/* Worksheet body */
.body {
  display: grid;
  grid-template-columns: 1fr 12px 197px;
  grid-template-rows: 374px 15px;
  background: #e6e6e6;
}
.sheet { height: 368px; margin-top: 6px; overflow: hidden; border-right: 1px solid #999; }
.cells { width: 100%; height: 371px; table-layout: fixed; border-collapse: separate; border-spacing: 0; background: #fff; color: #000; font-size: 7px; line-height: 9px; }
.cells th, .cells td { padding: 0; overflow: hidden; border: 0 solid #dadada; border-width: 0 1px 1px 0; white-space: nowrap; font-weight: 400; }
.cells thead th { height: 11px; border-color: #bdbdbd #bdbdbd #999; background: #e6e6e6; color: #222; }
.cells thead .is-active { border-bottom-color: #217346; background: #d2d2d2; color: #217346; }
.cells tbody th { padding-left: 2px; border-color: #bdbdbd #999 #c6c6c6; background: #e6e6e6; color: #333; text-align: center; }
.shot--pick .cells tbody th { padding-left: 4px; }
.cells tbody .is-active th { background: #d2d2d2; color: #217346; }
.cells .corner { background: linear-gradient(135deg, #e6e6e6 60%, #b0b0b0 60%); }
.w-n { width: 15px; }
.w-a { width: 124px; }
.w-b { width: 79px; }
.w-c { width: 112px; }
.w-d { width: 132px; }
.w-e { width: 64px; }
.w-f { width: 36px; }
.w-l { width: 5px; }
.cells .tint { border-color: #8ea9db; border-right-color: #d9e1f2; background: #d9e1f2; }
.cells .line { border-color: #8ea9db; border-right-color: #fff; }
.cells .plain { border-color: #fff; }
.cells .edge { border-right-color: #dadada; }
.cells .last { border-bottom-color: #d9e1f2; }
.cells .bold { font-weight: 700; }
.cells td { padding: 0 2px; }
.cells .num { text-align: right; padding-right: 1px; }
.cells .cur { outline: 1px solid #217346; outline-offset: -1px; border-color: #217346; }
.lab { display: flex; align-items: center; gap: 1px; }
.lab svg { width: 5px; height: 5px; }
.lab .drop { width: 9px; height: 9px; margin: -1px 0 -1px auto; border: 1px solid #aab2bd; background: #f6f8fb; }
.lab .drop svg { width: 8px; height: 8px; }
.lab--2 { padding-left: 8px; }
.lab--3 { padding-left: 21px; }

.vscroll { display: flex; flex-direction: column; width: 8px; margin: 7px 2px 1px; background: #dadada; }
.vscroll button, .hscroll button { width: 8px; height: 8px; border: 1px solid #ababab; background: #fff; color: #555; }
.vscroll__thumb { height: 21px; border: 1px solid #ababab; background: #fff; }
.vscroll .end { margin-top: auto; }

.sheets { grid-column: 1; display: flex; align-items: flex-start; border-top: 1px solid #999; font-size: 7px; line-height: 12px; }
.sheets__nav { display: flex; align-items: center; gap: 12px; width: 57px; height: 13px; padding-left: 14px; border-right: 1px solid #aaa; color: #bbb; }
.sheets__tabs { display: flex; }
.sheets__tabs a { height: 13px; padding: 0 8px; border-right: 1px solid #aaa; }
.sheets__tabs .is-active { padding: 0 7px; border-bottom: 2px solid #217346; background: #fff; color: #217346; font-weight: 700; }
.sheets__add { height: 13px; margin-left: 18px; color: #888; }
.sheets .dots { margin: 3px 8px 0 auto; }
.hscroll { display: flex; width: 331px; margin-top: 3px; background: #dadada; }
.hscroll__thumb { width: 286px; height: 8px; border: 1px solid #ababab; border-left: 0; background: #fff; }
.hscroll .end { margin-left: auto; }

/* Fields pane */
.pane { grid-column: 3; grid-row: 1 / 3; display: flex; flex-direction: column; margin: 8px 0 3px; padding: 3px 9px 0 7px; border-left: 1px solid #c6c6c6; }
.pane__head { display: flex; align-items: flex-start; gap: 18px; height: 21px; }
.pane__head h2 { flex: 1; color: #1c6b3e; font-size: 11px; line-height: 20px; }
.pane__head button { height: 16px; color: #777; }
.pane__choose { display: flex; justify-content: space-between; align-items: center; height: 16px; white-space: nowrap; }
.gear { gap: 3px; width: 25px; height: 15px; border: 1px solid #ababab; background: #fff; }
.find { display: flex; align-items: center; height: 12px; margin-top: 6px; padding-left: 1px; border: 1px solid #ababab; background: #fff; color: #666; }
.find input { flex: 1; width: 20px; }
.pane__list { height: 122px; margin-top: 9px; background: #fff; }
.pane__list ul { display: grid; grid-auto-rows: 1fr; height: 85px; margin-bottom: 5px; }
.pane__list li { display: flex; align-items: center; padding-right: 1px; font-weight: 700; }
.pane__list li.is-hot { padding-right: 10px; background: #9fd5b7; }
.pane__list .is-hot .box { background: #c6c6c6; }
.pane__list label { display: flex; align-items: center; flex: 1; gap: 3px; }
.pane__list a { padding-left: 1px; }
.box { appearance: none; display: grid; place-items: center; width: 7px; height: 7px; margin-left: 1px; border: 1px solid #8a8a8a; background: #fff; }
.box:checked::after { content: ""; width: 2px; height: 4px; margin-top: -1px; border: solid #555; border-width: 0 1px 1px 0; transform: rotate(40deg); }
.pane__drag { margin-top: 9px; padding: 2px 1px 0; border-top: 1px dotted #b5b5b5; }
.areas { display: grid; grid-template-columns: 90px 1fr; margin-top: 7px; }
.area { padding: 0 3px 0 1px; }
.area:nth-child(even) { padding: 0 1px; border-left: 1px solid #c0c0c0; }
.area:nth-child(-n+2) { padding-bottom: 4px; border-bottom: 1px solid #c0c0c0; }
.area:nth-child(n+3) { padding-top: 3px; }
.area h3 { display: flex; align-items: center; gap: 5px; margin: 0; padding-left: 2px; font-size: 6px; font-weight: 400; line-height: 11px; }
.area h3 svg { width: 6px; height: 6px; color: #8a8a8a; }
.area ul { height: 51px; padding: 1px; background: #fff; }
.area li { display: flex; align-items: center; height: 11px; margin-bottom: 1px; padding: 0 4px 0 3px; border: 1px solid #b5b5b5; white-space: nowrap; }
.area li span { display: flex; align-items: center; gap: 3px; flex: 1; min-width: 0; }
.area li span svg { width: 6px; height: 7px; }
.area li > svg { color: #666; }
.defer { display: flex; justify-content: space-between; align-items: center; margin-top: 10px; }
.defer label { display: flex; align-items: center; gap: 4px; }
.defer button { width: 26px; height: 13px; border: 1px solid #dedede; background: #fff; color: #b0b0b0; }

/* Status bar */
.status { display: flex; align-items: center; height: 12px; padding-right: 6px; border-top: 1px solid #c9c7c5; background: #f3f2f1; }
.status__macro { margin-left: 6px; }
.status__display { gap: 1px; margin: 0 9px 0 auto; }
.view { width: 22px; height: 11px; }
.view.is-on { background: #c6c6c6; }
.view + .view { margin-left: 1px; }
.view + button:not(.view) { margin-left: 2px; }
.status input { appearance: none; width: 56px; height: 1px; margin: 0 3px; background: #aaa; }
.status input::-webkit-slider-thumb { appearance: none; width: 3px; height: 7px; background: #666; }
.status__zoom { width: 21px; text-align: right; }

/* Right-hand crop of the workbook */
.book--part .formula { height: 15px; padding-top: 1px; }
.book--part .formula__name, .book--part .formula__tools, .book--part .formula .dots,
.book--part .formula__text input, .book--part .sheets__nav, .book--part .sheets__tabs,
.book--part .sheets__add, .book--part .status__macro { display: none; }
.book--part .formula__text { justify-content: flex-end; }

/* Filter menu */
.menu { position: absolute; left: 199px; top: 102px; width: 161px; border: 1px solid #c6c6c6; background: #fff; color: #222; }
.menu hr { height: 1px; margin: 0 0 0 17px; border: 0; background: #dcdcdc; }
.menu__item { width: 100%; justify-content: flex-start; gap: 5px; padding-left: 5px; }
.menu__item--tall { height: 16px; }
.menu__item--clear { height: 14px; }
.menu__item--sub { justify-content: space-between; height: 14px; padding: 0 2px 0 16px; }
.menu .is-off span { color: #a6a6a6; }
.find--menu { width: 140px; height: 11px; margin: 3px 0 2px 16px; }
.tree { display: flex; flex-direction: column; width: 140px; height: 95px; margin-left: 16px; border: 1px solid #dcdcdc; color: #000; }
.tree label { display: flex; align-items: center; gap: 2px; height: 10px; padding-left: 11px; background: linear-gradient(90deg, transparent 7px, #aaa 7px 11px, transparent 11px) 0 5px / 11px 1px no-repeat; }
.tree .box { border-color: #333; }
.tree .box--part::after { content: ""; width: 3px; height: 3px; background: #000; }
.tree .box--dark::after { border-color: #000; }
.picked { padding: 0 1px; background: #0078d7; color: #fff; line-height: 9px; }
.menu__actions { display: flex; justify-content: flex-end; gap: 6px; margin: 7px 4px 4px; }
.btn { width: 41px; height: 12px; border: 1px solid #adadad; background: #e1e1e1; color: #000; }
.btn--ok { border-color: #0078d7; background: #e5f1fb; }
.menu__foot { display: flex; justify-content: flex-end; height: 6px; padding-right: 2px; border-top: 1px solid #dcdcdc; background: #f1f1f4; }
.menu__state { position: absolute; left: 0; top: 106px; display: grid; place-items: center; width: 12px; height: 12px; border: 1px solid #9a9a9a; background: #c6c6c6; }
```

FILE: app.js
```js
const COLUMNS = [
  ["A", "w-a"], ["B", "w-b"], ["C", "w-c"], ["D", "w-d"], ["E", "w-e"], ["F", "w-f"],
  ["G", "w-d"], ["H", "w-e"], ["I", "w-f"], ["J", "w-f"], ["K", "w-f"], ["", "w-l"]
];
const ROW_COUNT = 32;

const FIELDS = [
  ["Channel.Channel Name", true], ["Date.Calendar Year", true], ["Product.Product Category Name"],
  ["Product.Product Subcategory Name"], ["Sales Territory.Sales Territory Group", true],
  ["Sales Amount"], ["Sales Discount Amount"], ["Sales Return Amount"]
];

const AREAS = [
  ["Filters", "funnel-solid", ["Date.Calendar Year", "Sales Territory.Sales T..."]],
  ["Columns", "cols", ["Values"]],
  ["Rows", "rows", ["Product.Product Cate...", "Product.Product Sub...", "Channel.Channel Na..."]],
  ["Values", "sigma", ["Sum of Sales Amount", "Sum of Sales Discount...", "Sum of Sales Return A..."]]
];

/* Pivot rows: level, label, sales, discount, returns */
const AUDIO = [1, "Audio", "36806849.36", "449596.249", "385298.79"];
const OTHERS = [
  [1, "Cameras and camcorders", "340578200.7", "4422882.121", "3860874.13"],
  [1, "Cell phones", "145378602.5", "1452071.747", "1251518.22"],
  [1, "Computers", "615558009.3", "7624803.623", "7149963.57"],
  [1, "Games and Toys", "25577415.98", "203327.4353", "173395.02"],
  [1, "Home Appliances", "592464311.8", "10370139.91", "9069007.75"],
  [1, "Music, Movies and Audio Books", "20195659.36", "285509.3505", "252883.49"],
  [1, "TV and Video", "243595452.2", "3164536.728", "2771655.54"],
  [0, "Grand Total", "2020154501", "27972867.16", "24914596.51"]
];
const SHEETS = {
  blank: [],
  store: [
    [1, "Audio", "9618540.99", "117273.26", "106782.84"],
    [1, "Cameras and camcorders", "91743279.63", "1210863.473", "1006333.38"],
    [1, "Cell phones", "38049339.83", "392566.0445", "322541.03"],
    [1, "Computers", "133400110.8", "1772066.632", "1551681.67"],
    [1, "Games and Toys", "18710234.58", "164576.2177", "139778.39"],
    [1, "Home Appliances", "170099235.4", "2794658.029", "2541852.26"],
    [1, "Music, Movies and Audio Books", "5478379.632", "76655.2685", "72162.48"],
    [1, "TV and Video", "66319305.44", "877483.963", "697816.93"],
    [0, "Grand Total", "533418426.2", "7406142.887", "6438948.98"]
  ],
  all: [AUDIO, ...OTHERS],
  expanded: [
    [...AUDIO, true],
    [2, "Bluetooth Headphones", "12526701.34", "155744.061", "131242.83"],
    [3, "Catalog", "2131504.007", "26982.933", "20919.49"],
    [3, "Online", "2130547.221", "27619.809", "22252.66"],
    [3, "Reseller", "1124018.415", "13478.4455", "11930.13"],
    [3, "Store", "7140631.697", "87662.8735", "76140.55"],
    [2, "MP4&MP3", "13930698.88", "178518.2755", "155626.26"],
    [3, "Catalog", "2204569.654", "29288.7565", "23487.84"],
    [3, "Online", "2257864.57", "27867.31", "26805.56"],
    [3, "Reseller", "1357585.537", "17998.993", "18191.29"],
    [3, "Store", "8110679.124", "103363.216", "87141.57"],
    [2, "Recording Pen", "10349449.14", "115333.9125", "98429.7"],
    [3, "Catalog", "1650294.07", "19171.38", "15857.95"],
    [3, "Online", "1716749.903", "18809.1975", "17189.35"],
    [3, "Reseller", "1031775.345", "11499.505", "10413.85"],
    [3, "Store", "5950629.82", "65853.83", "54968.55"],
    ...OTHERS
  ]
};

const icon = (name, cls = "") => `<svg class="${cls}"><use href="#${name}"/></svg>`;
const esc = (text) => text.replace(/&/g, "&amp;");
const drop = `<button type="button" class="drop" aria-label="Filter">${icon("filtered")}</button>`;

function pivotCells(row, data) {
  if (row === 1) {
    return [
      `<td class="tint">Date.Calendar Year</td>`,
      `<td class="tint edge"><div class="lab">Year 2009${drop}</div></td>`,
      `<td></td>`,
      `<td class="tint">Sales Territory.Sales Territory Group</td>`,
      `<td class="tint edge"><div class="lab">North America${drop}</div></td>`
    ];
  }
  if (row === 3) {
    return [
      `<td class="tint bold"><div class="lab">Row Labels${drop}</div></td>`,
      `<td class="tint bold">Sum of Sales Amount</td>`,
      `<td class="tint bold">Sum of Sales Discount Amount</td>`,
      `<td class="tint bold edge">Sum of Sales Return Amount</td>`
    ];
  }
  const item = data[row - 4];
  if (row < 4 || !item) return [];
  const [level, label, sales, discount, returns, open] = item;
  const look = level === 0 ? "tint last bold" : level === 1 ? "line bold" : level === 2 ? "plain bold" : "plain";
  const node = level === 1 || level === 2 ? icon(open || level === 2 ? "node-minus" : "node-plus") : "";
  const current = row === 4 ? " cur" : "";
  return [
    `<td class="${look}${current}"><div class="lab lab--${level}">${node}${esc(label)}</div></td>`,
    `<td class="${look} num">${sales}</td>`,
    `<td class="${look} num">${discount}</td>`,
    `<td class="${look} num edge">${returns}</td>`
  ];
}

function fillTable(table, sheet) {
  const partial = sheet === "blank";
  const columns = partial ? COLUMNS.slice(5) : COLUMNS;
  const heads = columns.map(([name, width]) =>
    `<th class="${width}${name === "A" ? " is-active" : ""}">${name}</th>`).join("");
  let html = `<thead><tr>${partial ? "" : '<th class="w-n corner"></th>'}${heads}</tr></thead><tbody>`;
  for (let row = 1; row <= ROW_COUNT; row++) {
    const cells = partial ? [] : pivotCells(row, SHEETS[sheet]);
    while (cells.length < columns.length) cells.push("<td></td>");
    html += `<tr${row === 4 ? ' class="is-active"' : ""}>${partial ? "" : `<th>${row}</th>`}${cells.join("")}</tr>`;
  }
  table.innerHTML = html + "</tbody>";
}

function fillPane(pane, hot) {
  pane.querySelector(".pane__list ul").innerHTML = FIELDS.map(([name, filtered], i) =>
    `<li${i === hot ? ' class="is-hot"' : ""}><label><input type="checkbox" class="box" checked>${name}</label>` +
    (filtered ? icon("funnel", "i-8") : "") + (i === hot ? icon("tri", "i-4") : "") + "</li>").join("");
  pane.querySelector(".areas").innerHTML = AREAS.map(([title, glyph, items]) =>
    `<section class="area"><h3>${icon(glyph)}${title}</h3><ul>` +
    items.map((text) => `<li><span>${text === "Values" ? icon("sigma") : ""}${text}</span>${icon("tri", "i-4")}</li>`).join("") +
    "</ul></section>").join("");
}

for (const book of document.querySelectorAll(".book")) {
  for (const part of book.dataset.parts.split(" ")) {
    book.append(document.getElementById(`part-${part}`).content.cloneNode(true));
  }
  fillTable(book.querySelector(".cells"), book.dataset.sheet);
  fillPane(book.querySelector(".pane"), "hot" in book.dataset ? Number(book.dataset.hot) : -1);
}
```
